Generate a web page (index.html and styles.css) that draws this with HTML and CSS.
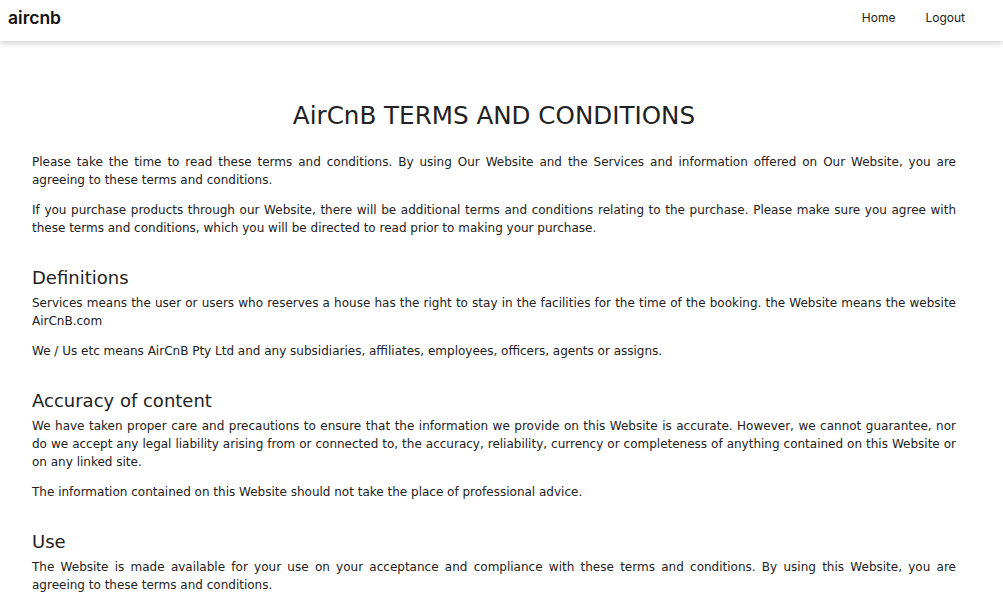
FILE: index.html
```html
<!DOCTYPE html>
<html lang="en">
<head>
<meta charset="utf-8">
<title>AirCnB Terms and Conditions</title>
<link rel="stylesheet" href="styles.css">
</head>
<body>
<header class="topbar">
  <div class="brand">aircnb</div>
  <nav class="nav">
    <a class="nav-link" href="#">Home</a>
    <a class="nav-link" href="#">Logout</a>
  </nav>
</header>
<main class="terms">
  <h1 class="title">AirCnB TERMS AND CONDITIONS</h1>
  <p>Please take the time to read these terms and conditions. By using Our Website and the Services and information offered on Our Website, you are agreeing to these terms and conditions.</p>
  <p>If you purchase products through our Website, there will be additional terms and conditions relating to the purchase. Please make sure you agree with these terms and conditions, which you will be directed to read prior to making your purchase.</p>
  <h2 class="section">Definitions</h2>
  <p>Services means the user or users who reserves a house has the right to stay in the facilities for the time of the booking. the Website means the website AirCnB.com</p>
  <p>We / Us etc means AirCnB Pty Ltd and any subsidiaries, affiliates, employees, officers, agents or assigns.</p>
  <h2 class="section">Accuracy of content</h2>
  <p>We have taken proper care and precautions to ensure that the information we provide on this Website is accurate. However, we cannot guarantee, nor do we accept any legal liability arising from or connected to, the accuracy, reliability, currency or completeness of anything contained on this Website or on any linked site.</p>
  <p>The information contained on this Website should not take the place of professional advice.</p>
  <h2 class="section">Use</h2>
  <p>The Website is made available for your use on your acceptance and compliance with these terms and conditions. By using this Website, you are agreeing to these terms and conditions.</p>
</main>
</body>
</html>
```

FILE: styles.css
```css
html, body {
  margin: 0;
  padding: 0;
  background: #fff;
}
body {
  font-family: "DejaVu Sans", Verdana, sans-serif;
  color: #222;
}
.topbar {
  height: 41px;
  display: flex;
  align-items: center;
  justify-content: space-between;
  padding: 0 8px;
  background: #fff;
  box-shadow: 0 2px 6px rgba(0,0,0,0.2);
  position: relative;
}
.brand {
  font-family: Inter, "Liberation Sans", sans-serif;
  font-size: 17.5px;
  font-weight: 600;
  color: #111;
  margin-top: -6px;
}
.nav {
  display: flex;
  margin-top: -7px;
  margin-right: 15px;
}
.nav-link {
  font-family: Inter, "Liberation Sans", sans-serif;
  font-size: 12px;
  color: #222;
  text-decoration: none;
  padding: 0 15px;
}
.terms {
  padding: 60px 47px 0 32px;
}
.title {
  font-weight: normal;
  font-size: 24.6px;
  text-align: center;
  margin: 0 0 23px;
  color: #222;
}
.terms p {
  font-size: 12px;
  line-height: 18px;
  text-align: justify;
  margin: 0 0 12px;
}
.section {
  font-weight: normal;
  font-size: 18px;
  margin: 30px 0 6px;
  color: #222;
}
```
